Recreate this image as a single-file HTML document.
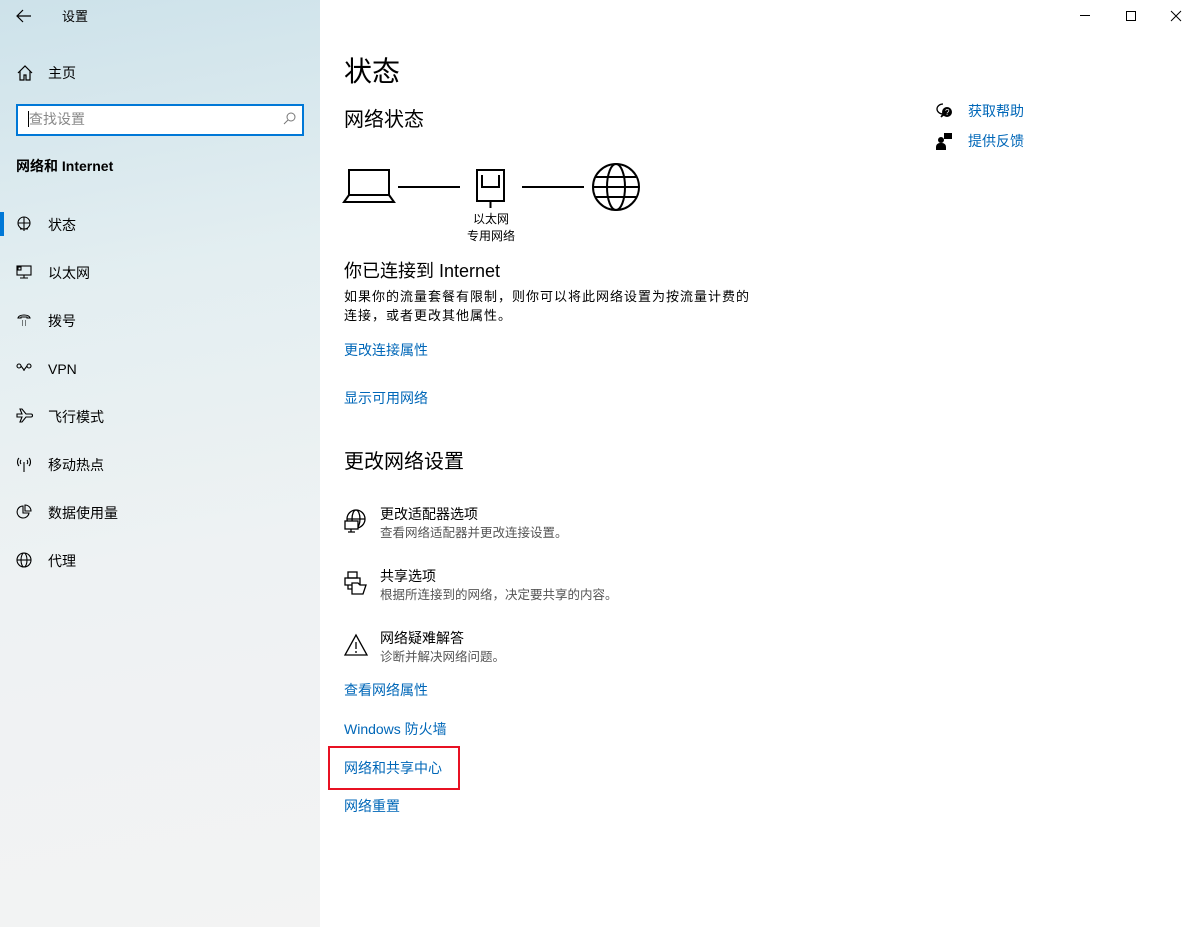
<!DOCTYPE html>
<html><head><meta charset="utf-8"><style>
*{margin:0;padding:0;box-sizing:border-box}
body{width:1200px;height:927px;position:relative;background:#fff;font-family:"Liberation Sans","Noto Sans CJK SC",sans-serif;color:#000;overflow:hidden}
.side{position:absolute;left:0;top:0;width:320px;height:927px;background:linear-gradient(170deg,#cde2ea 0%,#e3eef1 30%,#eef2f3 60%,#f3f3f3 100%)}
.a{position:absolute;white-space:nowrap;line-height:1}
.t14{font-size:14px}
.lk{color:#0067b8;font-size:14px}
svg{position:absolute;overflow:visible}
.desc{font-size:12.5px;color:#555}
</style></head><body>
<div class="side"></div>
<svg style="left:16px;top:9px" width="16" height="14" viewBox="0 0 16 14"><path d="M15 7H2M7 1L1 7l6 6" fill="none" stroke="#000" stroke-width="1.2"/></svg>
<div class="a" style="left:62px;top:10px;font-size:13px">设置</div>
<svg style="left:17px;top:65px" width="16" height="16" viewBox="0 0 16 16"><path d="M1 8L8 1l7 7M3 6v9h4v-5h2v5h4V6" fill="none" stroke="#000" stroke-width="1.2"/></svg>
<div class="a t14" style="left:48px;top:66px">主页</div>
<div style="position:absolute;left:16px;top:104px;width:288px;height:32px;border:2px solid #0078d7;background:#fff"></div>
<div style="position:absolute;left:28px;top:111px;width:1px;height:16px;background:#000"></div>
<div class="a t14" style="left:29px;top:112px;color:#888">查找设置</div>
<svg style="left:283px;top:112px" width="13" height="13" viewBox="0 0 13 13"><circle cx="8" cy="5" r="4" fill="none" stroke="#777"/><path d="M5 8L1 12" stroke="#777"/></svg>
<div class="a t14" style="left:16px;top:159px;font-weight:bold">网络和 Internet</div>
<div style="position:absolute;left:0;top:212px;width:4px;height:24px;background:#0078d7"></div>
<svg style="left:16px;top:216px" width="16" height="16" viewBox="0 0 16 16" fill="none" stroke="#000" stroke-width="1.1"><circle cx="8" cy="7" r="6"/><path d="M2 7h12M8 1v12M4 13h8M8 13v2"/></svg>
<div class="a t14" style="left:48px;top:218px">状态</div>
<svg style="left:16px;top:264px" width="16" height="16" viewBox="0 0 16 16" fill="none" stroke="#000" stroke-width="1.1"><rect x="1" y="2" width="14" height="9"/><path d="M8 11v3M4 14h8"/><rect x="2" y="3" width="3" height="3"/></svg>
<div class="a t14" style="left:48px;top:266px">以太网</div>
<svg style="left:16px;top:312px" width="16" height="16" viewBox="0 0 16 16" fill="none" stroke="#000" stroke-width="1.1"><path d="M2 6C3 2 13 2 14 6h-3V5H5v1z"/><path d="M6 9h1M9 9h1M6 11h1M9 11h1M6 13h1M9 13h1" stroke-dasharray="1 1"/></svg>
<div class="a t14" style="left:48px;top:314px">拨号</div>
<svg style="left:16px;top:361px" width="16" height="14" viewBox="0 0 16 14" fill="none" stroke="#000" stroke-width="1.1"><circle cx="3" cy="5" r="2"/><circle cx="13" cy="5" r="2"/><path d="M5 5l3 4 3-4M8 9v1"/></svg>
<div class="a t14" style="left:48px;top:362px">VPN</div>
<svg style="left:16px;top:408px" width="17" height="16" viewBox="0 0 17 16" fill="none" stroke="#000" stroke-width="1.1"><path d="M1 6h5l-2-5h2l4 5h5a1 1 0 010 3h-5l-4 5H4l2-5H1z"/></svg>
<div class="a t14" style="left:48px;top:410px">飞行模式</div>
<svg style="left:16px;top:456px" width="16" height="16" viewBox="0 0 16 16" fill="none" stroke="#000" stroke-width="1.1"><path d="M3 2C1 4 1 8 3 10M13 2c2 2 2 6 0 8M5 4c-1 1-1 3 0 4M11 4c1 1 1 3 0 4M8 6v10"/></svg>
<div class="a t14" style="left:48px;top:458px">移动热点</div>
<svg style="left:16px;top:504px" width="16" height="16" viewBox="0 0 16 16" fill="none" stroke="#000" stroke-width="1.1"><path d="M7 2a6 6 0 106 7H7z"/><path d="M9 1v6h6a6 6 0 00-6-6z"/></svg>
<div class="a t14" style="left:48px;top:506px">数据使用量</div>
<svg style="left:16px;top:552px" width="16" height="16" viewBox="0 0 16 16" fill="none" stroke="#000" stroke-width="1.1"><circle cx="8" cy="8" r="7"/><ellipse cx="8" cy="8" rx="3" ry="7"/><path d="M1 8h14"/></svg>
<div class="a t14" style="left:48px;top:554px">代理</div>

<svg style="left:1080px;top:15px" width="10" height="2"><path d="M0 .5h10" stroke="#000"/></svg>
<svg style="left:1126px;top:11px" width="10" height="10"><rect x=".5" y=".5" width="9" height="9" fill="none" stroke="#000"/></svg>
<svg style="left:1171px;top:11px" width="10" height="10"><path d="M0 0l10 10M10 0L0 10" stroke="#000"/></svg>

<div class="a" style="left:344px;top:58px;font-size:28px">状态</div>
<div class="a" style="left:344px;top:110px;font-size:20px">网络状态</div>
<svg style="left:340px;top:160px" width="310" height="60" viewBox="0 0 310 60" fill="none" stroke="#000" stroke-width="2"><path d="M9 10h40v25H9zM9 35l-5 7h50l-5-7M58 27h62M182 27h62"/><path d="M137 10h27v31h-27zM142 15v12h17V15M150.5 41v7"/><circle cx="276" cy="27" r="23"/><ellipse cx="276" cy="27" rx="9" ry="23"/><path d="M253 27h46M256 17h40M256 37h40"/></svg>
<div class="a" style="left:473px;top:213px;font-size:12px">以太网</div>
<div class="a" style="left:467px;top:230px;font-size:12px">专用网络</div>
<div class="a" style="left:344px;top:262px;font-size:18px">你已连接到 Internet</div>
<div class="a" style="left:344px;top:290px;font-size:13px;letter-spacing:1px">如果你的流量套餐有限制，则你可以将此网络设置为按流量计费的</div>
<div class="a" style="left:344px;top:309px;font-size:13px;letter-spacing:1px">连接，或者更改其他属性。</div>
<div class="a lk" style="left:344px;top:343px">更改连接属性</div>
<div class="a lk" style="left:344px;top:391px">显示可用网络</div>
<div class="a" style="left:344px;top:452px;font-size:20px">更改网络设置</div>

<svg style="left:344px;top:509px" width="24" height="24" viewBox="0 0 24 24" fill="none" stroke="#000" stroke-width="1.3"><circle cx="12" cy="10" r="9"/><ellipse cx="12" cy="10" rx="4" ry="9"/><path d="M3 10h18"/><rect x="1" y="12" width="13" height="8" fill="#fff"/><path d="M7 20v3M4 23h7"/></svg>
<div class="a t14" style="left:380px;top:507px">更改适配器选项</div>
<div class="a desc" style="left:380px;top:527px">查看网络适配器并更改连接设置。</div>
<svg style="left:344px;top:571px" width="24" height="24" viewBox="0 0 24 24" fill="none" stroke="#000" stroke-width="1.3"><rect x="4" y="1" width="9" height="6"/><path d="M1 7h15v7H1zM4 14v4h4"/><path d="M8 12h6l2 2h6l-3 9H8z" fill="#fff"/></svg>
<div class="a t14" style="left:380px;top:569px">共享选项</div>
<div class="a desc" style="left:380px;top:589px">根据所连接到的网络，决定要共享的内容。</div>
<svg style="left:344px;top:633px" width="24" height="24" viewBox="0 0 24 24" fill="none" stroke="#000" stroke-width="1.3"><path d="M12 2L1 22h22z"/><path d="M12 9v7M12 18v2"/></svg>
<div class="a t14" style="left:380px;top:631px">网络疑难解答</div>
<div class="a desc" style="left:380px;top:651px">诊断并解决网络问题。</div>
<div class="a lk" style="left:344px;top:683px">查看网络属性</div>
<div class="a lk" style="left:344px;top:722px">Windows 防火墙</div>
<div style="position:absolute;left:328px;top:746px;width:132px;height:44px;border:2px solid #e81123"></div>
<div class="a lk" style="left:344px;top:761px">网络和共享中心</div>
<div class="a lk" style="left:344px;top:799px">网络重置</div>

<svg style="left:935px;top:102px" width="18" height="18" viewBox="0 0 18 18"><path d="M8 2a6 5 0 100 10l-2 3 4-3" fill="none" stroke="#000" stroke-width="1.3"/><circle cx="12" cy="10" r="5" fill="#000"/><text x="10" y="13" font-size="8" fill="#fff" font-family="Liberation Sans">?</text></svg>
<div class="a lk" style="left:968px;top:104px">获取帮助</div>
<svg style="left:935px;top:132px" width="18" height="18" viewBox="0 0 18 18"><rect x="9" y="1" width="8" height="6" fill="#000"/><circle cx="6" cy="8" r="3" fill="#000"/><path d="M1 18v-3a4 4 0 014-4h2a4 4 0 014 4v3z" fill="#000"/></svg>
<div class="a lk" style="left:968px;top:134px">提供反馈</div>
</body></html>
